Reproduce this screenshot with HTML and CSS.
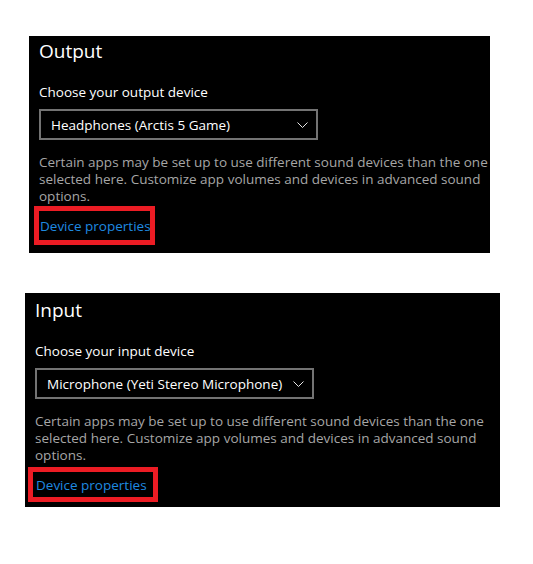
FILE: index.html
```html
<!DOCTYPE html>
<html>
<head>
<meta charset="utf-8">
<link rel="stylesheet" href="styles.css">
</head>
<body>
<section class="panel panel-output">
  <h2 class="title">Output</h2>
  <div class="label">Choose your output device</div>
  <div class="select">
    <span class="select-text">Headphones (Arctis 5 Game)</span>
    <svg class="chev" width="11" height="6" viewBox="0 0 11 6"><path d="M0.5 0.5 L5.5 5.5 L10.5 0.5" fill="none" stroke="#e6e6e6" stroke-width="1"/></svg>
  </div>
  <p class="note">Certain apps may be set up to use different sound devices than the one<br>selected here. Customize app volumes and devices in advanced sound<br>options.</p>
  <a class="link link-out">Device properties</a>
</section>
<section class="panel panel-input">
  <h2 class="title">Input</h2>
  <div class="label">Choose your input device</div>
  <div class="select">
    <span class="select-text">Microphone (Yeti Stereo Microphone)</span>
    <svg class="chev" width="11" height="6" viewBox="0 0 11 6"><path d="M0.5 0.5 L5.5 5.5 L10.5 0.5" fill="none" stroke="#e6e6e6" stroke-width="1"/></svg>
  </div>
  <p class="note">Certain apps may be set up to use different sound devices than the one<br>selected here. Customize app volumes and devices in advanced sound<br>options.</p>
  <a class="link link-in">Device properties</a>
</section>
</body>
</html>
```

FILE: styles.css
```css
html, body {
  margin: 0;
  padding: 0;
  background: #ffffff;
}
body {
  font-family: "Open Sans", "Noto Sans", sans-serif;
  padding-top: 36px;
  height: 564px;
  box-sizing: border-box;
}
.panel {
  background: #000000;
  box-sizing: border-box;
  padding: 1px 10px 0 10px;
  display: flex;
  flex-direction: column;
  align-items: flex-start;
}
.panel-output {
  margin-left: 29px;
  width: 461px;
  height: 217px;
}
.panel-input {
  margin-left: 25px;
  margin-top: 40px;
  width: 475px;
  height: 214px;
  padding-top: 3px;
}
.title {
  margin: 0;
  font-weight: 400;
  font-size: 19px;
  line-height: 28px;
  color: #ffffff;
}
.label {
  margin-top: 17px;
  font-size: 13.5px;
  line-height: 20px;
  color: #ffffff;
}
.select {
  margin-top: 7px;
  width: 279px;
  height: 31px;
  box-sizing: border-box;
  border: 2px solid #737373;
  display: flex;
  align-items: center;
  justify-content: space-between;
  padding: 0 8px 0 10px;
}
.select-text {
  font-size: 13.5px;
  color: #ffffff;
  line-height: 20px;
}
.chev {
  display: block;
}
.note {
  margin: 14px 0 0 0;
  font-size: 13.5px;
  line-height: 17px;
  color: #a6a6a6;
  white-space: nowrap;
}
.link {
  margin-top: 11px;
  font-size: 13.5px;
  line-height: 20px;
  color: #1f8ae0;
  position: relative;
  margin-left: 1px;
}
.link::after {
  content: "";
  position: absolute;
  border: 5px solid #ec1c24;
}
.link-out::after {
  left: -6px;
  right: -4px;
  top: -10px;
  bottom: -9px;
}
.link-in::after {
  left: -8px;
  right: -11px;
  top: -8px;
  bottom: -7px;
}
```
